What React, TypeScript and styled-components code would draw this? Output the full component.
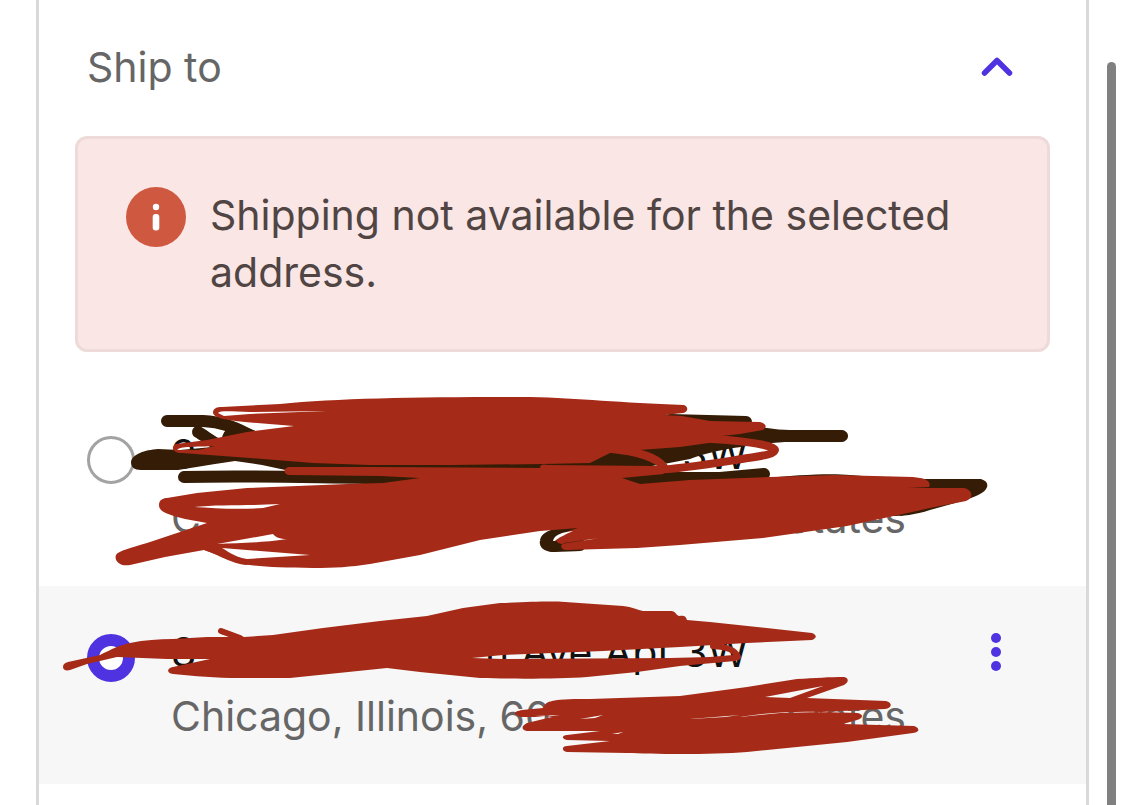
import React, { useState } from "react";
import styled, { createGlobalStyle } from "styled-components";

const GlobalStyle = createGlobalStyle`
  *, *::before, *::after { box-sizing: border-box; }
  body {
    margin: 0;
    background: #ffffff;
    font-family: Inter, "Liberation Sans", sans-serif;
    font-size: 41px;
    line-height: 56px;
    overflow: hidden;
  }
`;

const Page = styled.div`
  display: flex;
  min-height: 100vh;
  padding-left: 36px;
`;

const Panel = styled.main`
  flex: 1;
  min-width: 0;
  border: solid #d9d9d9;
  border-width: 0 3px;
`;

const ScrollRail = styled.div`
  display: flex;
  width: 36px;
  padding: 62px 9px 0 18px;
`;

const ScrollThumb = styled.div`
  flex: 1;
  border-radius: 5px 5px 0 0;
  background: #808080;
`;

const Header = styled.header`
  display: flex;
  align-items: center;
  justify-content: space-between;
  height: 136px;
  padding: 0 65px 2px 48px;
`;

const Title = styled.h2`
  margin: 0;
  color: #666666;
  font-size: 41px;
  font-weight: 400;
`;

const IconButton = styled.button`
  display: flex;
  align-items: center;
  justify-content: center;
  flex: none;
  width: 48px;
  height: 48px;
  padding: 0;
  border: 0;
  background: transparent;
  color: #4f33e0;
  cursor: pointer;
`;

const Alert = styled.div`
  display: flex;
  gap: 24px;
  margin: 0 36px 36px;
  padding: 48px;
  border: 3px solid #efdada;
  border-radius: 12px;
  background: #fae6e5;
  color: #504543;
`;

const AlertIcon = styled.svg`
  flex: none;
  width: 60px;
  height: 60px;
`;

const AlertText = styled.p`
  margin: 0;
  line-height: 57px;
`;

const Row = styled.div<{ $selected: boolean }>`
  position: relative;
  display: flex;
  justify-content: space-between;
  height: 198px;
  padding: 38px 66px 38px 48px;
  background: ${(p) => (p.$selected ? "#f7f7f7" : "#ffffff")};
`;

const Option = styled.label`
  display: flex;
  gap: 36px;
  cursor: pointer;
`;

const Radio = styled.input`
  appearance: none;
  flex: none;
  width: 48px;
  height: 48px;
  margin: 10px 0 0;
  border: 3px solid #a3a3a3;
  border-radius: 50%;
  background: #ffffff;

  &:checked {
    border: 12px solid #4f33e0;
  }
`;

const Address = styled.span`
  display: flex;
  flex-direction: column;
  gap: 8px;
`;

const Line = styled.span<{ $muted?: boolean }>`
  display: flex;
  justify-content: space-between;
  width: ${(p) => (p.$muted ? "735px" : "577px")};
  color: ${(p) => (p.$muted ? "#666666" : "#111111")};
  white-space: nowrap;
`;

const MenuButton = styled(IconButton)`
  margin-top: 4px;
`;

const Redaction = styled.svg`
  position: absolute;
  top: 0;
  left: 0;
  width: 1047px;
  height: 198px;
  overflow: visible;
  pointer-events: none;
`;

const INK = "#a52b18";
const DARK = "#341c06";

const FirstScribble = () => (
  <Redaction viewBox="39 388 1047 198" aria-hidden="true">
    <g fill="none" stroke={DARK} strokeWidth="12" strokeLinecap="round" strokeLinejoin="round">
      <path d="M167 421H203C225 422 237 429 252 436" />
      <path d="M198 432C207 437 217 447 232 450" />
      <path d="M228 438C231 430 242 430 255 438" />
      <path d="M184 477C250 475 330 478 400 478H720L764 474" />
      <path d="M670 420L746 422" />
      <path d="M620 526C575 532 547 533 546 541C544 548 555 546 580 545" />
    </g>
    <path
      fill={DARK}
      d="M131 462C132 454 145 450 158 449L180 450L500 420L660 414L700 417L767 428C775 429 782 430 790 430H842C850 431 850 441 842 442H785L760 444C745 447 720 448 690 459L664 464L640 468H370L290 471L262 465L235 461L215 464L178 470H141C134 470 131 467 131 462Z"
    />
    <path
      fill={DARK}
      d="M750 480C790 475 830 473 850 475C885 478 900 477 925 479H981C991 482 989 491 976 496L966 500L930 510C915 515 903 516 890 516L760 500Z"
    />
    <path
      fill={INK}
      fillRule="evenodd"
      d="M213 413C213 408 217 407 222 407L280 404C340 398 420 397 530 397C580 398 620 403 684 405C689 407 688 412 683 413L664 415L682 416L710 421L760 422C767 424 767 427 763 430L740 434L712 437L738 439L680 447L612 452L590 463L543 464L450 465L370 465L313 463L250 458L182 453C173 453 170 447 176 444L207 440L247 432L294 426L245 422C225 420 214 418 213 413Z
         M218 413C221 410 235 412 250 412L326 411L250 414L224 416Z
         M177 450C180 446 195 447 215 446L198 450Z"
    />
    <g fill="none" stroke={INK} strokeWidth="8" strokeLinecap="round" strokeLinejoin="round">
      <path d="M612 449C640 452 656 457 664 467" />
      <path d="M712 439C760 442 775 447 775 450C774 455 760 456 742 459C710 464 680 469 655 470L545 469" />
    </g>
    <path
      fill={INK}
      fillRule="evenodd"
      d="M159 505C159 500 163 498 167 498L197 493L247 488L347 484L383 483L420 478L380 476L289 475C283 474 283 468 289 467L370 467L540 468C540 464 544 464 548 465L572 468L660 468L664 474L622 478L640 484L690 480L770 477L835 475L913 477C925 478 932 481 929 487L908 488H964C973 490 974 498 966 501L930 508L903 514L847 526L763 538L680 545L637 548L566 550C560 549 560 545 564 543L600 538L561 544C550 541 558 534 578 528L540 531L480 540L420 555L370 564C350 567 335 568 313 568C280 568 260 567 243 564L204 550L165 557L130 565C119 567 114 560 116 555C118 551 130 548 147 543L207 523L185 519C165 514 159 511 159 505Z
         M193 507C220 504 245 506 280 504L263 508C235 510 215 508 193 507Z
         M217 544L273 534C275 537 280 539 287 539C260 543 240 543 217 544Z
         M222 548L260 551L310 555L247 559C238 558 230 553 222 548Z"
    />
    <path d="M207 548C222 553 233 561 246 562" fill="none" stroke={INK} strokeWidth="6" strokeLinecap="round" />
    <path d="M553 541C554 535 562 532 573 531C564 535 558 538 555 541Z" fill="#ffffff" />
  </Redaction>
);

const SecondScribble = () => (
  <Redaction viewBox="39 586 1047 198" aria-hidden="true">
    <path
      fill={INK}
      d="M63 667C63 664 65 663 68 662L100 655C112 649 120 645 130 643C145 640 158 639 173 639L207 637H236L221 634C216 631 219 628 223 629L244 637L273 635L323 628L380 621L427 616L463 608L500 603C530 602 550 601 565 602L623 606C632 607 638 610 643 611H672C676 612 676 615 679 616C684 615 686 616 687 620L710 622L812 633C817 635 817 638 812 640L747 643L680 647L603 651L503 655L472 658L503 659L670 658L710 657L733 655C741 655 741 660 735 661L680 666L637 672L587 677C560 679 510 679 480 678L420 672L387 668L290 678H240C215 678 195 676 173 674C166 673 167 668 173 667L210 659H167L117 657L87 664L70 670C66 671 63 670 63 667Z"
    />
    <path
      d="M221 631L240 638M713 646C728 647 735 650 738 657"
      fill="none"
      stroke={INK}
      strokeWidth="6"
      strokeLinecap="round"
    />
    <path
      fill={INK}
      fillRule="evenodd"
      d="M515 714C515 711 518 711 522 710L543 708C545 703 548 702 552 701C562 699 575 699 590 699L680 696L747 687L797 679C815 678 830 677 844 677C849 678 849 682 844 685L807 698L886 701C893 703 892 708 885 709L820 712L858 713C864 715 863 718 857 720L843 724L914 726C920 728 920 732 913 733L847 742L747 752C710 755 650 754 627 753L567 752C561 751 562 746 567 746L610 741L567 740C561 739 562 735 567 735L600 731H527C521 730 521 726 527 723L552 717L520 717Z
         M765 697L823 686L790 698Z
         M740 717C770 712 800 711 822 712L780 713Z
         M580 719L603 715L595 718Z
         M535 716L560 715L545 717Z
         M612 734L623 732L618 734Z
         M690 719L740 715L725 717Z"
    />
  </Redaction>
);

interface ShippingAddress {
  id: string;
  street: string[];
  region: string[];
  Scribble: React.FC;
}

const addresses: ShippingAddress[] = [
  { id: "first", street: ["9", "3W"], region: ["C", "States"], Scribble: FirstScribble },
  {
    id: "second",
    street: ["8", "n Ave Apt 3W"],
    region: ["Chicago, Illinois, 60", "States"],
    Scribble: SecondScribble,
  },
];

export default function App() {
  const [selected, setSelected] = useState("second");

  return (
    <>
      <GlobalStyle />
      <Page>
        <Panel>
          <Header>
            <Title>Ship to</Title>
            <IconButton type="button" aria-label="Collapse ship to" aria-expanded="true">
              <svg width="36" height="24" viewBox="0 0 36 24" fill="none" stroke="currentColor" strokeWidth="5.500" strokeLinecap="round" strokeLinejoin="round">
                <path d="M5.500 18L18 5.500L30.500 18" />
              </svg>
            </IconButton>
          </Header>
          <Alert role="alert">
            <AlertIcon viewBox="0 0 60 60" aria-hidden="true">
              <circle cx="30" cy="30" r="30" fill="#cf5841" />
              <circle cx="30" cy="20" r="3.200" fill="#ffffff" />
              <rect x="26.700" y="27" width="6.600" height="16.500" rx="3" fill="#ffffff" />
            </AlertIcon>
            <AlertText>Shipping not available for the selected address.</AlertText>
          </Alert>
          {addresses.map(({ id, street, region, Scribble }) => (
            <Row key={id} $selected={selected === id}>
              <Option>
                <Radio
                  type="radio"
                  name="address"
                  value={id}
                  checked={selected === id}
                  onChange={() => setSelected(id)}
                />
                <Address>
                  <Line>
                    {street.map((part) => (
                      <span key={part}>{part}</span>
                    ))}
                  </Line>
                  <Line $muted>
                    {region.map((part) => (
                      <span key={part}>{part}</span>
                    ))}
                  </Line>
                </Address>
              </Option>
              {selected === id && (
                <MenuButton type="button" aria-label="Address options">
                  <svg width="12" height="40" viewBox="0 0 12 40" fill="currentColor">
                    <circle cx="6" cy="6" r="5" />
                    <circle cx="6" cy="20" r="5" />
                    <circle cx="6" cy="34" r="5" />
                  </svg>
                </MenuButton>
              )}
              <Scribble />
            </Row>
          ))}
        </Panel>
        <ScrollRail aria-hidden="true">
          <ScrollThumb />
        </ScrollRail>
      </Page>
    </>
  );
}
